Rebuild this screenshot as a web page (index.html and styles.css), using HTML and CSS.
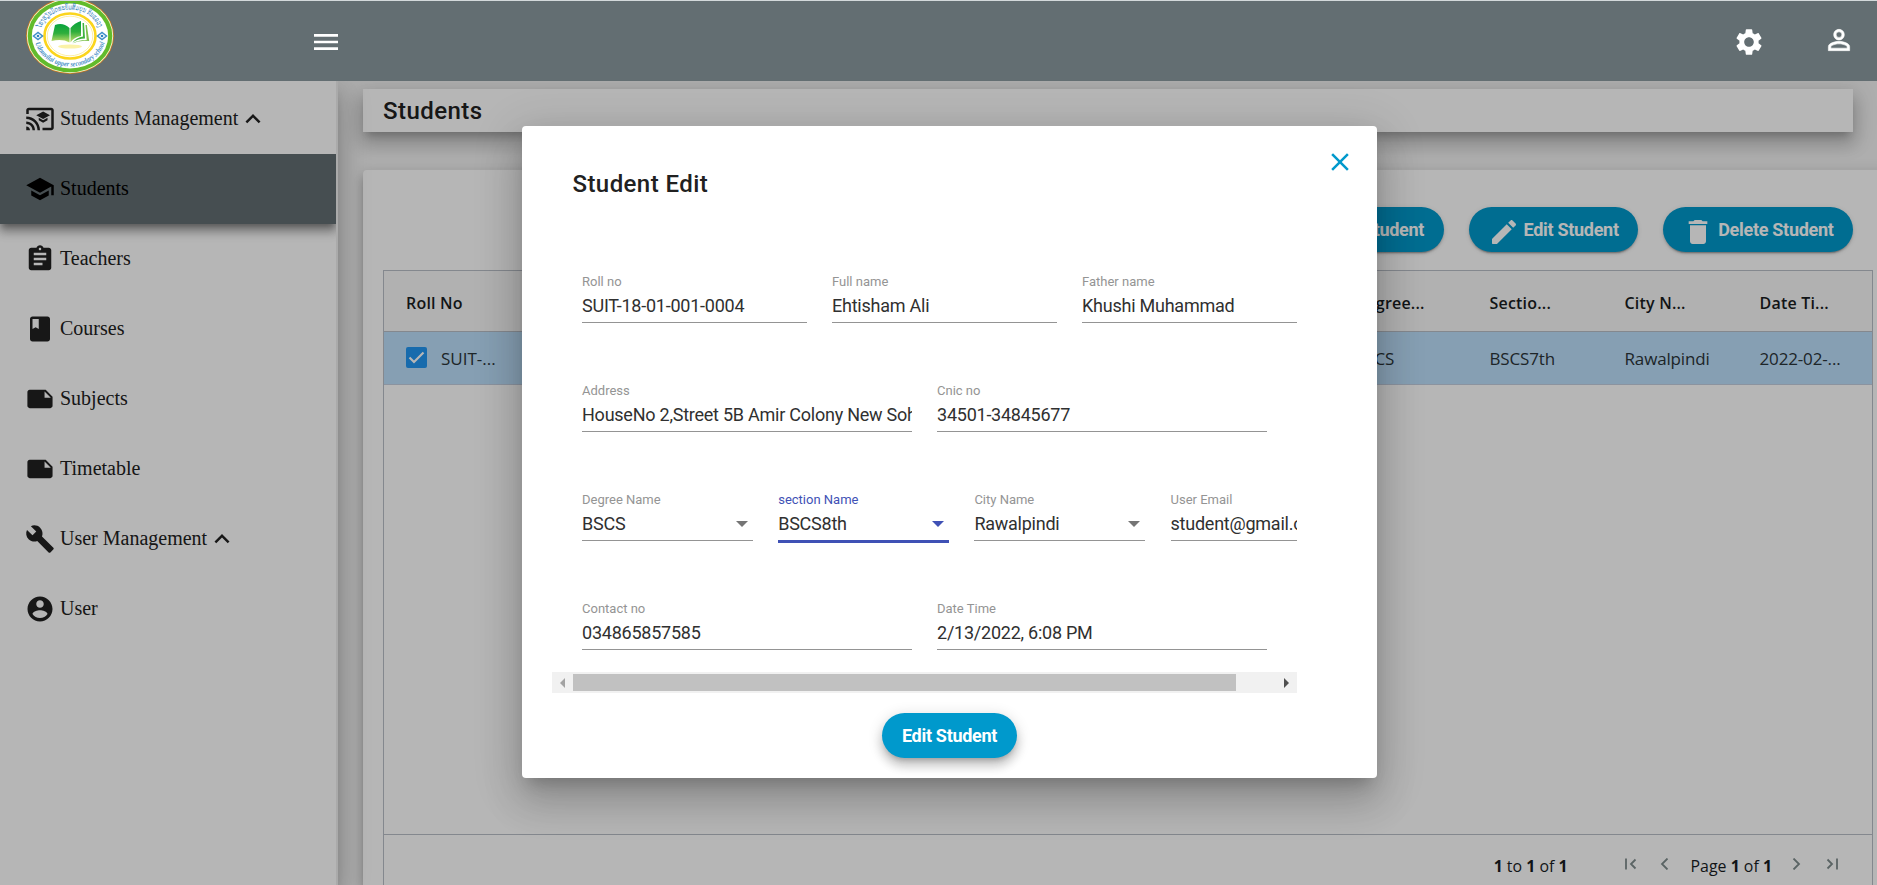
FILE: index.html
```html
<!DOCTYPE html>
<html lang="en">
<head>
<meta charset="utf-8">
<title>Students</title>
<link rel="stylesheet" href="styles.css">
</head>
<body>
<header class="topbar">
  <svg class="logo" viewBox="0 0 88 76" preserveAspectRatio="none">
    <defs>
      <linearGradient id="leaf" x1="0" y1="0" x2="0" y2="1"><stop offset="0" stop-color="#07a33c"/><stop offset=".5" stop-color="#2fae3c"/><stop offset="1" stop-color="#c9df6a"/></linearGradient>
      <path id="arcTop" d="M14.500 36 A29.500 24.500 0 0 1 73.500 36"/>
      <path id="arcBottom" d="M8.500 38 A35.500 30.500 0 0 0 79.500 38"/>
    </defs>
    <ellipse cx="44" cy="38" rx="44" ry="38" fill="#c8791c"/>
    <ellipse cx="44" cy="38" rx="43.200" ry="37.200" fill="#f4f6d8"/>
    <ellipse cx="44" cy="38" rx="42.300" ry="36.300" fill="#62bb2b"/>
    <ellipse cx="44" cy="38" rx="38.200" ry="32.600" fill="#fff"/>
    <ellipse cx="44" cy="38" rx="25.500" ry="22.500" fill="#fff" stroke="#fbd51c" stroke-width="2.600"/>
    <ellipse cx="44" cy="38" rx="22.800" ry="19.800" fill="none" stroke="#fdeb8c" stroke-width=".8"/>
    <ellipse cx="44" cy="48.500" rx="12" ry="2" fill="#fbf2a8"/>
    <path d="M29 27q8-3 14.500 3v14.500q-7-4-18-1.500z" fill="url(#leaf)"/>
    <path d="M44.500 30q4-5 10.500-7v15q-7 1-10.500 6.500z" fill="url(#leaf)"/>
    <path d="M56.500 25h1.500l1 15.500q-7 0-12.500 4 4-5 10.500-6z" fill="#3fb33e"/>
    <path d="M59.500 27h1.300l2.400 16q-10-1-17 2.500 6-3.700 14.500-3.500z" fill="#7cc04c"/>
    <g fill="none" stroke="#3f8fc9" stroke-width="1.500"><path d="M7.500 38l4.500-3.500 4.500 3.500-4.500 3.500z"/><path d="M71.500 38l4.500-3.500 4.500 3.500-4.500 3.500z"/></g>
    <g fill="#2d82c4"><circle cx="12" cy="38" r="1.300"/><circle cx="76" cy="38" r="1.300"/></g>
    <text class="logo-lao"><textPath href="#arcTop" startOffset="6" textLength="72" lengthAdjust="spacingAndGlyphs">ໂຮງຮຽນມັດທະຍົມສົມບູນ ກິນແລວງ</textPath></text>
    <text class="logo-latin"><textPath href="#arcBottom" startOffset="7" textLength="90" lengthAdjust="spacingAndGlyphs">Udomvilai upper secondary school</textPath></text>
  </svg>
  <svg class="ico ico-menu" viewBox="0 0 24 24"><path d="M3 18h18v-2H3v2zm0-5h18v-2H3v2zm0-7v2h18V6H3z"/></svg>
  <svg class="ico ico-gear" viewBox="0 0 24 24"><path d="M19.140 12.940c.04-.3.060-.61.060-.94 0-.32-.02-.64-.07-.94l2.030-1.580c.18-.14.230-.41.120-.61l-1.920-3.320c-.12-.22-.37-.29-.59-.22l-2.390.96c-.5-.38-1.030-.7-1.620-.94l-.36-2.540c-.04-.24-.24-.41-.48-.41h-3.840c-.24 0-.43.170-.47.410l-.36 2.540c-.59.240-1.130.57-1.620.94l-2.390-.96c-.22-.08-.47 0-.59.220L2.740 8.870c-.12.210-.08.470.12.610l2.030 1.580c-.05.3-.09.630-.09.940s.02.640.07.940l-2.030 1.580c-.18.140-.23.410-.12.610l1.920 3.320c.12.220.37.290.59.220l2.390-.96c.5.380 1.030.7 1.620.94l.36 2.540c.05.240.24.410.48.410h3.840c.24 0 .44-.17.470-.41l.36-2.540c.59-.24 1.130-.56 1.620-.94l2.390.96c.22.080.47 0 .59-.22l1.920-3.320c.12-.22.070-.47-.12-.61l-2.010-1.580zM12 15.600c-1.980 0-3.600-1.620-3.600-3.600s1.620-3.600 3.600-3.600 3.600 1.620 3.600 3.600-1.620 3.600-3.600 3.600z"/></svg>
  <svg class="ico ico-person" viewBox="0 0 24 24"><path d="M12 5.900a2.100 2.100 0 1 1 0 4.200 2.100 2.100 0 0 1 0-4.200m0 9c2.970 0 6.100 1.460 6.100 2.100v1.100H5.900V17c0-.64 3.130-2.100 6.100-2.100M12 4C9.790 4 8 5.790 8 8s1.790 4 4 4 4-1.790 4-4-1.790-4-4-4zm0 9c-2.670 0-8 1.340-8 4v3h16v-3c0-2.660-5.330-4-8-4z"/></svg>
</header>

<div class="page">
  <nav class="sidebar">
    <a class="nav-item"><svg class="ico" viewBox="0 0 24 24"><path d="M21 3H3c-1.100 0-2 .9-2 2v3h2V5h18v14h-7v2h7c1.100 0 2-.9 2-2V5c0-1.100-.9-2-2-2zM1 18v3h3c0-1.660-1.340-3-3-3zm0-4v2c2.760 0 5 2.240 5 5h2c0-3.870-3.130-7-7-7zm0-4v2c4.970 0 9 4.030 9 9h2c0-6.080-4.930-11-11-11zm10 1.090v2L14.500 15l3.500-1.910v-2L14.500 13 11 11.090zM14.500 6L9 9l5.500 3L20 9l-5.500-3z"/></svg><span>Students Management</span><svg class="ico chev" viewBox="0 0 24 24"><path d="M12 8l-6 6 1.410 1.410L12 10.830l4.590 4.580L18 14z"/></svg></a>
    <a class="nav-item active"><svg class="ico" viewBox="0 0 24 24"><path d="M5 13.180v4L12 21l7-3.820v-4L12 17l-7-3.820zM12 3L1 9l11 6 9-4.910V17h2V9L12 3z"/></svg><span>Students</span></a>
    <a class="nav-item"><svg class="ico" viewBox="0 0 24 24"><path d="M19 3h-4.180C14.400 1.840 13.300 1 12 1c-1.300 0-2.400.84-2.820 2H5c-1.100 0-2 .9-2 2v14c0 1.100.9 2 2 2h14c1.100 0 2-.9 2-2V5c0-1.100-.9-2-2-2zm-7 0c.55 0 1 .45 1 1s-.45 1-1 1-1-.45-1-1 .45-1 1-1zm2 14H7v-2h7v2zm3-4H7v-2h10v2zm0-4H7V7h10v2z"/></svg><span>Teachers</span></a>
    <a class="nav-item"><svg class="ico" viewBox="0 0 24 24"><path d="M18 2H6c-1.100 0-2 .9-2 2v16c0 1.100.9 2 2 2h12c1.100 0 2-.9 2-2V4c0-1.100-.9-2-2-2zM6 4h5v8l-2.500-1.500L6 12V4z"/></svg><span>Courses</span></a>
    <a class="nav-item"><svg class="ico" viewBox="0 0 24 24"><path d="M3 4c-1.100 0-1.990.9-1.990 2L1 18c0 1.100.9 2 2 2h18c1.100 0 2-.9 2-2V10l-6-6H3zm13 7V5.500l5.500 5.500H16z" transform="translate(1 1) scale(.915)"/></svg><span>Subjects</span></a>
    <a class="nav-item"><svg class="ico" viewBox="0 0 24 24"><path d="M3 4c-1.100 0-1.990.9-1.990 2L1 18c0 1.100.9 2 2 2h18c1.100 0 2-.9 2-2V10l-6-6H3zm13 7V5.500l5.500 5.500H16z" transform="translate(1 1) scale(.915)"/></svg><span>Timetable</span></a>
    <a class="nav-item"><svg class="ico" viewBox="0 0 24 24"><path d="M22.700 19l-9.100-9.100c.9-2.300.4-5-1.500-6.900-2-2-5-2.400-7.400-1.300L9 6 6 9 1.600 4.700C.4 7.100.9 10.100 2.900 12.100c1.900 1.900 4.600 2.400 6.900 1.500l9.100 9.100c.4.4 1 .4 1.400 0l2.300-2.300c.5-.4.5-1.100.1-1.400z"/></svg><span>User Management</span><svg class="ico chev" viewBox="0 0 24 24"><path d="M12 8l-6 6 1.410 1.410L12 10.830l4.590 4.580L18 14z"/></svg></a>
    <a class="nav-item"><svg class="ico" viewBox="0 0 24 24"><path d="M12 2C6.480 2 2 6.480 2 12s4.480 10 10 10 10-4.480 10-10S17.520 2 12 2zm0 3c1.660 0 3 1.340 3 3s-1.340 3-3 3-3-1.340-3-3 1.340-3 3-3zm0 14.200c-2.500 0-4.710-1.280-6-3.220.03-1.990 4-3.080 6-3.080 1.990 0 5.970 1.090 6 3.080-1.290 1.940-3.500 3.220-6 3.220z"/></svg><span>User</span></a>
  </nav>

  <main class="content">
    <h1 class="title-card">Students</h1>
    <section class="card">
      <div class="actions">
        <button class="btn"><svg class="ico" viewBox="0 0 24 24"><path d="M19 13h-6v6h-2v-6H5v-2h6V5h2v6h6v2z"/></svg>Add Student</button>
        <button class="btn"><svg class="ico" viewBox="0 0 24 24"><path d="M3 17.460v3.040c0 .28.220.5.5.5h3.040c.13 0 .26-.05.350-.15L17.810 9.940l-3.750-3.750L3.150 17.100c-.1.100-.15.220-.15.360zM20.710 7.040c.39-.39.390-1.020 0-1.410l-2.340-2.340c-.39-.39-1.020-.39-1.410 0l-1.830 1.830 3.750 3.750 1.830-1.830z"/></svg>Edit Student</button>
        <button class="btn"><svg class="ico" viewBox="0 0 24 24"><path d="M6 19c0 1.100.9 2 2 2h8c1.100 0 2-.9 2-2V7H6v12zM19 4h-3.500l-1-1h-5l-1 1H5v2h14V4z"/></svg>Delete Student</button>
      </div>
      <div class="grid">
        <div class="grid-head"><b>Roll No</b><b class="col-degree">Degree...</b><b>Sectio...</b><b>City N...</b><b>Date Ti...</b></div>
        <div class="grid-row">
          <span class="check-cell"><svg class="check" viewBox="0 0 21 21"><rect width="21" height="21" rx="2"/><path d="M3.500 10.500l4.500 4.500 9.500-9.500"/></svg>SUIT-...</span>
          <span class="col-degree">BSCS</span><span>BSCS7th</span><span>Rawalpindi</span><span>2022-02-...</span>
        </div>
        <div class="grid-space"></div>
        <div class="grid-foot">
          <span class="summary"><b>1</b> to <b>1</b> of <b>1</b></span>
          <svg class="pg first" viewBox="0 0 12 12"><path d="M1 .5v11M10.500 1.500L6 6l4.500 4.500"/></svg>
          <svg class="pg prev" viewBox="0 0 12 12"><path d="M8.500 .5L3 6l5.500 5.500"/></svg>
          <span class="pages">Page <b>1</b> of <b>1</b></span>
          <svg class="pg next" viewBox="0 0 12 12"><path d="M3.500 .5L9 6l-5.500 5.500"/></svg>
          <svg class="pg last" viewBox="0 0 12 12"><path d="M1.500 1.500L6 6l-4.500 4.500M11 .5v11"/></svg>
        </div>
      </div>
    </section>
  </main>

  <div class="backdrop">
    <div class="dialog">
      <div class="dialog-head">
        <h2>Student Edit</h2>
        <svg class="ico close" viewBox="0 0 24 24"><path d="M19 6.410L17.590 5 12 10.590 6.410 5 5 6.410 10.590 12 5 17.590 6.410 19 12 13.410 17.590 19 19 17.590 13.410 12z"/></svg>
      </div>
      <div class="form">
        <div class="form-row thirds">
          <label class="field"><span>Roll no</span><div>SUIT-18-01-001-0004</div></label>
          <label class="field"><span>Full name</span><div>Ehtisham Ali</div></label>
          <label class="field"><span>Father name</span><div>Khushi Muhammad</div></label>
        </div>
        <div class="form-row halves">
          <label class="field"><span>Address</span><div>HouseNo 2,Street 5B Amir Colony New Soh</div></label>
          <label class="field"><span>Cnic no</span><div>34501-34845677</div></label>
        </div>
        <div class="form-row quarters">
          <label class="field select"><span>Degree Name</span><div>BSCS</div></label>
          <label class="field select focused"><span>section Name</span><div>BSCS8th</div></label>
          <label class="field select"><span>City Name</span><div>Rawalpindi</div></label>
          <label class="field"><span>User Email</span><div>student@gmail.com</div></label>
        </div>
        <div class="form-row halves">
          <label class="field"><span>Contact no</span><div>034865857585</div></label>
          <label class="field"><span>Date Time</span><div>2/13/2022, 6:08 PM</div></label>
        </div>
      </div>
      <div class="scrollbar"><i class="arrow left"></i><i class="thumb"></i><i class="arrow right"></i></div>
      <button class="btn submit">Edit Student</button>
    </div>
  </div>
</div>
</body>
</html>
```
FILE: styles.css
```css
* { box-sizing: border-box; }
body { margin: 0; height: 885px; overflow: hidden; display: flex; flex-direction: column; font-family: Roboto, sans-serif; background: #f4f4f4; }
.ico { width: 30px; height: 30px; fill: currentColor; flex: none; }

.topbar { height: 81px; flex: none; display: flex; align-items: center; background: #636e72; border-top: 1px solid #d3d9db; color: #fff; padding: 0 22px 0 26px; overflow: hidden; z-index: 2; }
.topbar .ico { width: 32px; height: 32px; margin-top: 2px; }
.logo { width: 88px; height: 76px; flex: none; margin-top: -11px; }
.logo-lao { font: 7.500px "DejaVu Sans", sans-serif; fill: #3b86bd; }
.logo-latin { font: italic bold 7.500px "Liberation Serif", serif; fill: #4a92c8; }
.topbar .ico-menu { margin-left: 195.500px; }
.topbar .ico-gear { margin-left: auto; }
.topbar .ico-person { margin-left: 58px; margin-top: -2px; stroke: #fff; stroke-width: .4; }

.page { position: relative; flex: 1; display: flex; min-height: 0; overflow: hidden; }
.sidebar { width: 338px; flex: none; padding-top: 3px; background: #fff; border-right: 2px solid #eee; z-index: 1; box-shadow: 0 8px 10px -5px rgba(0,0,0,.2), 0 16px 24px 2px rgba(0,0,0,.14), 0 6px 30px 5px rgba(0,0,0,.12); color: #212121; font: 20px "Liberation Serif", serif; }
.nav-item { height: 70px; display: flex; align-items: center; padding-left: 25px; gap: 5px; position: relative; }
.nav-item span { margin-top: -1px; }
.nav-item .chev { margin-left: -5px; }
.nav-item.active { background: #636e72; color: #000; box-shadow: 0 5px 5px -3px rgba(0,0,0,.2), 0 8px 10px 1px rgba(0,0,0,.14), 0 3px 14px 2px rgba(0,0,0,.12), 0 6px 8px rgba(0,0,0,.2); clip-path: inset(0 0 -40px 0); }

.content { flex: 1; min-width: 0; padding: 8px 0 0 25px; display: flex; flex-direction: column; }
.title-card { margin: 0 24px 38px 0; height: 43px; flex: none; padding-left: 20px; background: #fff; font-size: 24px; font-weight: 500; letter-spacing: .45px; line-height: 44px; color: #212121; box-shadow: 0 7px 8px -4px rgba(0,0,0,.2), 0 12px 17px 2px rgba(0,0,0,.14), 0 5px 22px 4px rgba(0,0,0,.12); }
.card { flex: 1; margin-right: -10px; padding: 37px 14px 0 20px; background: #fff; border-radius: 4px 0 0 0; display: flex; flex-direction: column; box-shadow: 0 5px 5px -3px rgba(0,0,0,.2), 0 8px 10px 1px rgba(0,0,0,.14), 0 3px 14px 2px rgba(0,0,0,.12); }
.actions { display: flex; justify-content: flex-end; gap: 25px; padding-right: 20px; margin-bottom: 18px; }
.btn { height: 45px; display: flex; align-items: center; border: 0; border-radius: 23px; padding: 0 19.500px 0 19px; gap: 4px; background: #0099cc; color: #fff; font: 700 18px Roboto, sans-serif; letter-spacing: -.3px; white-space: nowrap; box-shadow: 0 3px 1px -2px rgba(0,0,0,.2), 0 2px 2px rgba(0,0,0,.14), 0 1px 5px rgba(0,0,0,.12); }
.btn .ico { width: 32px; height: 32px; margin-top: 5px; }

.grid { flex: 1; display: flex; flex-direction: column; border: 1px solid #babfc7; border-bottom: 0; font-family: "Open Sans", sans-serif; color: #181d1f; white-space: nowrap; overflow: hidden; }
.grid-head, .grid-row { display: grid; grid-template-columns: 138.500px repeat(10, 135px); padding-left: 22px; align-items: center; }
.grid-head { height: 61px; background: #f8f8f8; border-bottom: 1px solid #babfc7; font-size: 16px; padding-top: 3px; }
.grid-head b { font-weight: 600; letter-spacing: .2px; }
.grid-row { height: 53px; background: #bcdffb; border-bottom: 1px solid #c3cfdf; font: 17px "Open Sans", sans-serif; letter-spacing: -.15px; color: #2b3438; padding-top: 1px; }
.col-degree { grid-column: 8; }
.check-cell { display: flex; align-items: center; gap: 14px; letter-spacing: 0; }
.check { width: 21px; height: 21px; margin-top: -2px; }
.check rect { fill: #2196f3; }
.check path { fill: none; stroke: #fff; stroke-width: 2.200; }
.grid-space { flex: 1; }
.grid-foot { height: 51px; display: flex; align-items: center; border-top: 1px solid #babfc7; padding: 11px 34px 0 0; justify-content: flex-end; font-size: 15.900px; }
.pg { width: 12px; height: 12px; fill: none; stroke: #7f8c8d; stroke-width: 1.800; margin-top: -4px; }
.summary { margin-right: 57px; }
.first { margin-right: 22px; }
.prev { margin-right: 20px; }
.next { margin: -4px 24px 0 18px; }

.backdrop { position: absolute; inset: 0; background: rgba(0,0,0,.288); display: flex; justify-content: center; align-items: flex-start; z-index: 3; padding-top: 45px; padding-left: 22px; }
.dialog { width: 855px; height: 652px; background: #fff; border-radius: 4px; padding: 0 80px 0 30px; box-shadow: 0 11px 15px -7px rgba(0,0,0,.2), 0 24px 38px 3px rgba(0,0,0,.14), 0 9px 46px 8px rgba(0,0,0,.12); }
.dialog-head { display: flex; justify-content: space-between; align-items: flex-start; height: 138px; margin-right: -58px; }
.dialog-head h2 { margin: 43px 0 0 20.500px; font-size: 24px; line-height: 30px; font-weight: 500; letter-spacing: .42px; color: #212121; }
.close { margin-top: 21px; margin-right: 0; color: #0099cc; }
.form { height: 408px; overflow: hidden; padding-left: 30px; }
.form-row { height: 109px; display: grid; gap: 25px; align-items: start; }
.thirds { grid-template-columns: repeat(3, 225px); }
.halves { grid-template-columns: repeat(2, 330px); }
.quarters { grid-template-columns: repeat(4, 171px); column-gap: 25.200px; }
.field { position: relative; height: 59px; display: flex; flex-direction: column; padding-top: 10px; border-bottom: 1px solid #949494; white-space: nowrap; }
.field span { font-size: 13px; line-height: 16px; color: #949494; }
.field div { font-size: 18px; font-weight: 400; letter-spacing: -.24px; line-height: 26px; margin-top: 3px; color: #303030; overflow: hidden; }
.select::after { content: ""; position: absolute; right: 5px; top: 39px; border: 6px solid transparent; border-top-color: #757575; border-bottom: 0; }
.focused { border-bottom: 3px solid #3f51b5; height: 61px; }
.focused span { color: #3f51b5; }
.focused::after { border-top-color: #3f51b5; }
.scrollbar { height: 21px; background: #f1f1f1; display: flex; align-items: center; padding: 0 8px; }
.thumb { width: 663px; height: 17px; background: #c1c1c1; margin: 0 48px 0 8px; }
.arrow { border: 5px solid transparent; width: 0; height: 0; }
.left { border-right-color: #a3a3a3; border-left: 0; }
.right { border-left-color: #505050; border-right: 0; }
.submit { margin: 20px 0 0 330px; padding: 0; justify-content: center; width: 135px; box-shadow: 0 5px 5px -3px rgba(0,0,0,.2), 0 8px 10px 1px rgba(0,0,0,.14), 0 3px 14px 2px rgba(0,0,0,.12); }
```
